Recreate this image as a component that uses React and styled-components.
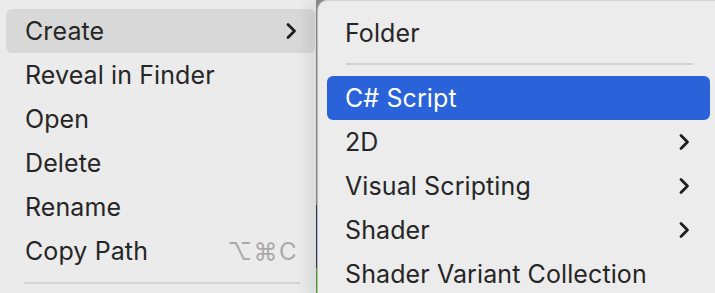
import React from 'react'
import styled, { createGlobalStyle } from 'styled-components'

const GlobalStyle = createGlobalStyle`
  html, body {
    margin: 0;
    padding: 0;
    width: 715px;
    height: 293px;
    overflow: hidden;
    background: #5b5b5b;
  }
  body {
    font-family: Inter, "Noto Sans", "Liberation Sans", sans-serif;
    -webkit-font-smoothing: antialiased;
  }
`

const Desk = styled.div`
  display: flex;
  align-items: flex-start;
  width: 715px;
  height: 293px;
  overflow: hidden;
  background: linear-gradient(
    to bottom,
    #8d8d8d 0,
    #8d8d8d 205px,
    #2f3a5c 205px,
    #2f3a5c 268px,
    #4fa52c 268px
  );
`

const Menu = styled.div`
  flex: none;
  width: 316px;
  height: 293px;
  box-sizing: border-box;
  padding: 9px 1px 0 6px;
  background: #ebebeb;
  display: flex;
  flex-direction: column;
`

const SubMenu = styled.div`
  flex: none;
  width: 420px;
  height: 300px;
  margin-left: 1px;
  box-sizing: border-box;
  padding: 10px 0 0 9px;
  background: #ececec;
  border-left: 1px solid #b9b9b9;
  border-top: 1px solid #d2d2d2;
  border-top-left-radius: 10px;
  box-shadow: -10px 0 14px rgba(0, 0, 0, 0.07);
  display: flex;
  flex-direction: column;
`

const Item = styled.div`
  height: 44px;
  flex: none;
  display: flex;
  align-items: center;
  justify-content: space-between;
  box-sizing: border-box;
  padding: 0 ${p => p.$padRight}px 0 ${p => p.$padLeft}px;
  border-radius: 6px;
  font-size: 25px;
  letter-spacing: 0.1px;
  color: ${p => (p.$active ? '#ffffff' : '#262626')};
  background: ${p =>
    p.$active ? '#2a62d9' : p.$hover ? '#d8d8d8' : 'transparent'};
`

const Shortcut = styled.span`
  color: #a9a9a9;
  font-size: 24px;
  letter-spacing: 1.5px;
  margin-right: -1px;
`

const Separator = styled.div`
  flex: none;
  height: 2px;
  background: #d3d3d3;
  margin: ${p => p.$margin};
`

const Chevron = () => (
  <svg width="12" height="18" viewBox="0 0 12 18">
    <path
      d="M3 2.5 L9.5 9 L3 15.5"
      fill="none"
      stroke="#1f1f1f"
      strokeWidth="2.8"
      strokeLinecap="round"
      strokeLinejoin="round"
    />
  </svg>
)

const leftItems = [
  { label: 'Create', hover: true, sub: true },
  { label: 'Reveal in Finder' },
  { label: 'Open' },
  { label: 'Delete' },
  { label: 'Rename' },
  { label: 'Copy Path', shortcut: '⌥⌘C' }
]

const subItems = [
  { label: '2D', sub: true },
  { label: 'Visual Scripting', sub: true },
  { label: 'Shader', sub: true },
  { label: 'Shader Variant Collection' }
]

export default function App() {
  return (
    <>
      <GlobalStyle />
      <Desk>
        <Menu>
          {leftItems.map(item => (
            <Item
              key={item.label}
              $hover={item.hover}
              $padLeft={19}
              $padRight={18}
            >
              <span>{item.label}</span>
              {item.sub && <Chevron />}
              {item.shortcut && <Shortcut>{item.shortcut}</Shortcut>}
            </Item>
          ))}
          <Separator $margin="9px 15px 0 18px" />
        </Menu>
        <SubMenu>
          <Item $padLeft={18} $padRight={20} style={{ width: 383 }}>
            <span>Folder</span>
          </Item>
          <Separator $margin="8px 28px 11px 19px" style={{ width: 347 }} />
          <Item $active $padLeft={18} $padRight={20} style={{ width: 383 }}>
            <span>C# Script</span>
          </Item>
          {subItems.map(item => (
            <Item
              key={item.label}
              $padLeft={18}
              $padRight={20}
              style={{ width: 383 }}
            >
              <span>{item.label}</span>
              {item.sub && <Chevron />}
            </Item>
          ))}
        </SubMenu>
      </Desk>
    </>
  )
}
